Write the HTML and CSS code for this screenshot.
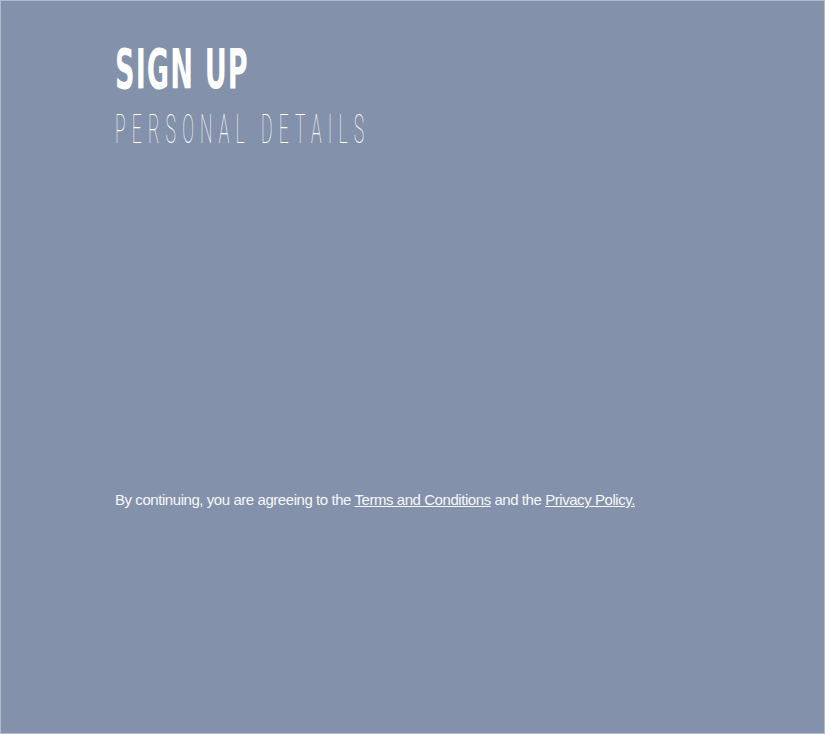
FILE: index.html
```html
<!DOCTYPE html>
<html>
<head>
<meta charset="utf-8">
<link rel="stylesheet" href="styles.css">
</head>
<body>
<div class="page">
  <header class="head">
    <h1 class="title">SIGN UP</h1>
    <h2 class="subtitle">PERSONAL DETAILS</h2>
  </header>
  <p class="terms">By continuing, you are agreeing to the <a href="#">Terms and Conditions</a> and the <a href="#">Privacy Policy.</a></p>
</div>
</body>
</html>
```
FILE: styles.css
```css
html, body {
  margin: 0;
  padding: 0;
}
body {
  background: #8391aa;
}
.page {
  box-sizing: border-box;
  width: 825px;
  height: 734px;
  border: 1px solid #b3bccb;
  background: #8391aa;
  padding: 40px 0 0 114px;
  display: flex;
  flex-direction: column;
}
.head {
  display: flex;
  flex-direction: column;
}
.title {
  margin: 0;
  color: #fff;
  font-family: "DejaVu Sans Condensed", "DejaVu Sans", sans-serif;
  font-weight: 700;
  font-size: 56px;
  line-height: 56px;
  letter-spacing: 2px;
  transform: scaleX(0.54);
  transform-origin: left center;
  white-space: nowrap;
}
.subtitle {
  margin: 13px 0 0 0;
  color: #fff;
  font-family: "Roboto", "Lato", sans-serif;
  font-weight: 100;
  font-size: 40px;
  line-height: 40px;
  letter-spacing: 14px;
  transform: scaleX(0.44);
  transform-origin: left center;
  white-space: nowrap;
}
.terms {
  margin: 340px 0 0 0;
  color: #f6f7fa;
  font-family: "Liberation Sans", Arial, sans-serif;
  font-size: 15px;
  letter-spacing: -0.44px;
  line-height: 20px;
}
.terms a {
  color: #f6f7fa;
  text-decoration: underline;
}
```
